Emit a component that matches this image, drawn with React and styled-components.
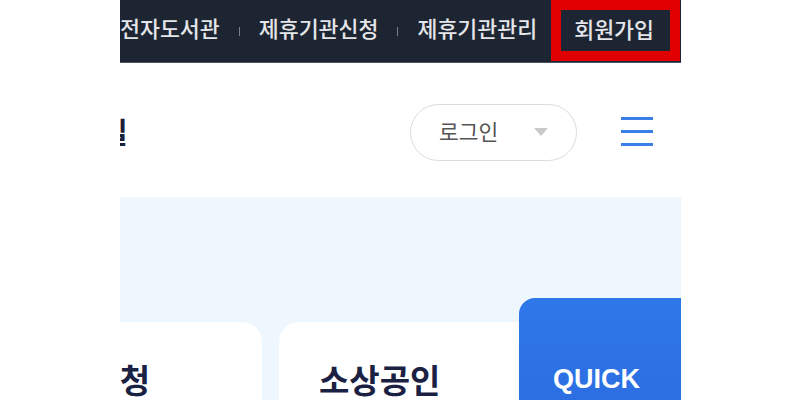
import React from "react";
import styled, { createGlobalStyle } from "styled-components";

const Global = createGlobalStyle`
  html, body { margin: 0; padding: 0; background: #ffffff; }
  body { font-family: "Noto Sans CJK KR", "Noto Sans", sans-serif; }
`;

const Page = styled.div`
  margin-left: 120px;
  width: 561px;
  height: 400px;
  overflow: hidden;
  display: flex;
  flex-direction: column;
`;

const TopBar = styled.nav`
  height: 62px;
  flex: none;
  background: #1e2532;
  border-bottom: 1px solid #4b5261;
  display: flex;
  align-items: center;
  justify-content: flex-end;
  white-space: nowrap;
`;

const NavLink = styled.a`
  font-size: 21.7px;
  font-weight: 500;
  color: #e4e6ea;
  line-height: 1;
  margin-top: -7px;
  text-decoration: none;
`;

const Sep = styled.span`
  width: 1px;
  height: 9px;
  background: #7a808c;
  margin: 0 19px;
  flex: none;
`;

const JoinBox = styled.a`
  margin-left: 14px;
  margin-right: 1px;
  align-self: flex-start;
  height: 61px;
  box-sizing: border-box;
  border: 10px solid #e00000;
  padding: 0 16px 0 13px;
  display: flex;
  align-items: center;
  font-size: 21.7px;
  font-weight: 500;
  color: #e4e6ea;
  line-height: 1;
  text-decoration: none;
  & > span { margin-top: -4px; }
`;

const Header = styled.header`
  height: 134px;
  flex: none;
  display: flex;
  align-items: center;
  padding-right: 28px;
`;

const Brand = styled.div`
  margin-left: -19px;
  font-size: 29px;
  font-weight: 700;
  color: #1b2038;
  line-height: 1;
  margin-top: 2px;
`;

const Spacer = styled.div`
  flex: 1;
`;

const LoginPill = styled.button`
  width: 167px;
  height: 57px;
  box-sizing: border-box;
  border: 1px solid #dcdcdc;
  border-radius: 29px;
  background: #fff;
  display: flex;
  align-items: center;
  padding: 0 28px;
  margin-top: 4px;
  font-family: "Noto Sans CJK KR", sans-serif;
  font-size: 21.5px;
  color: #555;
  cursor: pointer;
`;

const PillLabel = styled.span`
  flex: 1;
  text-align: left;
  margin-top: -3px;
`;

const Caret = styled.span`
  width: 0;
  height: 0;
  border-left: 7px solid transparent;
  border-right: 7px solid transparent;
  border-top: 8px solid #cacaca;
`;

const Burger = styled.button`
  margin-left: 44px;
  width: 32px;
  height: 29px;
  padding: 0;
  border: 0;
  background: none;
  display: flex;
  flex-direction: column;
  justify-content: space-between;
  margin-top: 2px;
  & > span {
    display: block;
    height: 3px;
    background: #3a7fe8;
  }
`;

const Section = styled.section`
  position: relative;
  flex: 1;
  background: #eef6fe;
  padding-top: 125px;
`;

const Cards = styled.div`
  display: flex;
  gap: 17px;
  margin-left: -160px;
`;

const Card = styled.div`
  flex: none;
  width: 302px;
  height: 120px;
  background: #ffffff;
  border-radius: 20px 20px 0 0;
  padding: 38px 40px 0;
  box-sizing: border-box;
`;

const CardTitle = styled.h3`
  margin: 0;
  font-size: 33px;
  font-weight: 700;
  color: #1b2142;
  line-height: 1.2;
  white-space: nowrap;
`;

const EndTitle = styled(CardTitle)`
  text-align: right;
  margin-right: 72px;
`;

const Quick = styled.aside`
  position: absolute;
  left: 399px;
  top: 101px;
  width: 162px;
  height: 140px;
  border-radius: 16px 0 0 0;
  background: linear-gradient(180deg, #2f78ea 0%, #2a6be0 100%);
  padding: 66px 0 0 34px;
  box-sizing: border-box;
`;

const QuickLabel = styled.span`
  font-family: "Liberation Sans", Arial, sans-serif;
  font-weight: 700;
  font-size: 27px;
  color: #ffffff;
`;

export default function App() {
  return (
    <>
      <Global />
      <Page>
        <TopBar>
          <NavLink>전자도서관</NavLink>
          <Sep />
          <NavLink>제휴기관신청</NavLink>
          <Sep />
          <NavLink>제휴기관관리</NavLink>
          <JoinBox><span>회원가입</span></JoinBox>
        </TopBar>
        <Header>
          <Brand>길</Brand>
          <Spacer />
          <LoginPill>
            <PillLabel>로그인</PillLabel>
            <Caret />
          </LoginPill>
          <Burger aria-label="menu">
            <span />
            <span />
            <span />
          </Burger>
        </Header>
        <Section>
          <Cards>
            <Card><EndTitle>지원신청</EndTitle></Card>
            <Card><CardTitle>소상공인</CardTitle></Card>
          </Cards>
          <Quick><QuickLabel>QUICK</QuickLabel></Quick>
        </Section>
      </Page>
    </>
  );
}
